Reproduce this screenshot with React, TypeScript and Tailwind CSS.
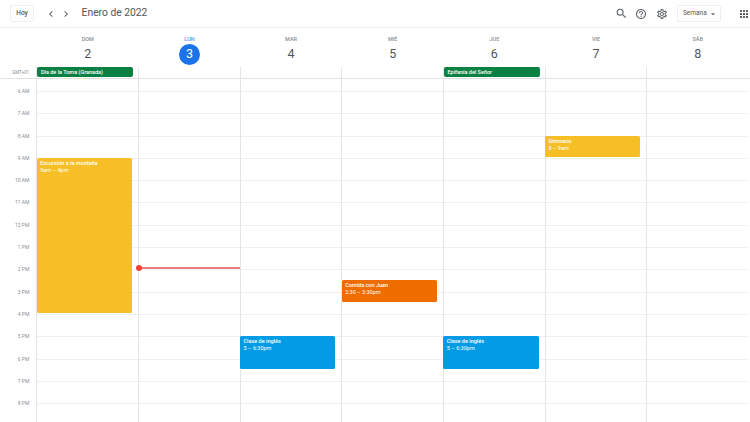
import React from 'react';
import {
  MdApps,
  MdArrowDropDown,
  MdChevronLeft,
  MdChevronRight,
  MdHelpOutline,
  MdOutlineSettings,
  MdSearch,
} from 'react-icons/md';

const days = [
  { name: 'DOM', num: '2' },
  { name: 'LUN', num: '3', today: true },
  { name: 'MAR', num: '4' },
  { name: 'MIÉ', num: '5' },
  { name: 'JUE', num: '6' },
  { name: 'VIE', num: '7' },
  { name: 'SÁB', num: '8' },
];

const hours = ['6 AM', '7 AM', '8 AM', '9 AM', '10 AM', '11 AM', '12 PM', '1 PM', '2 PM', '3 PM', '4 PM', '5 PM', '6 PM', '7 PM', '8 PM'];

const columns = 'grid grid-cols-[36.4px_repeat(7,101.65px)]';

const Header = () => (
  <header className="flex h-[28px] items-center border-b border-[#eef0f1] pl-[10px]">
    <button className="h-[17px] w-[24px] rounded-[2px] border border-[#eceef0] text-[6.5px] font-medium text-[#50555a]">Hoy</button>
    <MdChevronLeft className="ml-[11px] text-[#5f6368]" size={12} />
    <MdChevronRight className="ml-[2.6px] text-[#5f6368]" size={12} />
    <h1 className="ml-[10px] text-[10.3px] leading-none text-[#50555a]">Enero de 2022</h1>
    <div className="ml-auto flex items-center">
      <MdSearch className="text-[#5f6368]" size={13} />
      <MdHelpOutline className="ml-[7px] text-[#5f6368]" size={12} />
      <MdOutlineSettings className="ml-[9px] text-[#5f6368]" size={12} />
      <button className="ml-[9px] flex h-[17px] w-[44px] items-center rounded-[2px] border border-[#eceef0] pl-[5px] text-[6.5px] text-[#50555a]">
        Semana
        <MdArrowDropDown className="ml-[1px] text-[#5f6368]" size={10} />
      </button>
      <MdApps className="ml-[17px] text-[#5f6368]" size={12} />
    </div>
  </header>
);

const DayHeads = () => (
  <div className="grid h-[39px] grid-cols-[37px_repeat(7,101.65px)]">
    <div />
    {days.map((d) => (
      <div key={d.name} className="flex flex-col items-center pt-[8px]">
        <span className={`text-[5.5px] font-medium leading-[7px] ${d.today ? 'text-[#5f95e8]' : 'text-[#8a8f94]'}`}>{d.name}</span>
        {d.today ? (
          <span className="mt-[1px] flex h-[21px] w-[21px] items-center justify-center rounded-full bg-[#1a73e8] text-[12.5px] text-white">{d.num}</span>
        ) : (
          <span className="mt-[1px] flex h-[21px] items-center text-[12.5px] text-[#50555a]">{d.num}</span>
        )}
      </div>
    ))}
  </div>
);

const AllDay = () => (
  <div className={`${columns} h-[12px] border-b border-[#dfe1e4]`}>
    <div className="pr-[7px] pt-[2px] text-right text-[4.5px] leading-[7px] text-[#8a8f94]">GMT+01</div>
    {days.map((d) => (
      <div key={d.name} className="border-l border-[#e3e5e9]">
        {(d.num === '2' || d.num === '6') && (
          <div className="h-[10px] w-[96px] truncate rounded-[2px] bg-[#0b8043] pl-[3.5px] text-[5.5px] font-medium leading-[10px] text-white">
            {d.num === '2' ? 'Día de la Toma (Granada)' : 'Epifanía del Señor'}
          </div>
        )}
      </div>
    ))}
  </div>
);

const EventBox = ({ title, time, className }: { title: string; time: string; className: string }) => (
  <div className={`absolute left-[-0.7px] w-[95.3px] rounded-[1.5px] px-[3.5px] pt-[2px] text-[5.5px] leading-[7px] text-white ${className}`}>
    <div className="font-medium">{title}</div>
    <div>{time}</div>
  </div>
);

const DayColumn = ({ children }: { children?: React.ReactNode }) => (
  <div className="relative border-l border-[#e3e5e9]">
    <div className="h-[13px] border-b border-[#eef0f2]" />
    {hours.map((h) => (
      <div key={h} className="h-[22.3px] border-b border-[#eef0f2]" />
    ))}
    {children}
  </div>
);

export default function App() {
  return (
    <div className="h-[422px] w-[750px] overflow-hidden bg-white font-['Roboto',sans-serif]">
      <Header />
      <DayHeads />
      <AllDay />
      <div className={columns}>
        <div className="pt-[9px]">
          {hours.map((h) => (
            <div key={h} className="h-[22.3px] pr-[7px] text-right text-[5px] leading-[7px] text-[#8a8f94]">{h}</div>
          ))}
        </div>
        <DayColumn>
          <EventBox title="Excursión a la montaña" time="9am – 4pm" className="top-[79.3px] h-[154.4px] bg-[#f6bf26]" />
        </DayColumn>
        <DayColumn>
          {/* now line */}
          <div className="absolute left-0 right-0 top-[188.25px] h-[1.5px] bg-[#e57f78]" />
          <div className="absolute left-[-3px] top-[186.25px] h-[5.5px] w-[5.5px] rounded-full bg-[#ea4335]" />
        </DayColumn>
        <DayColumn>
          <EventBox title="Clase de inglés" time="5 – 6:30pm" className="top-[257px] h-[32.7px] bg-[#039be5]" />
        </DayColumn>
        <DayColumn>
          <EventBox title="Comida con Juan" time="2:30 – 3:30pm" className="top-[201.3px] h-[21.7px] bg-[#ef6c00]" />
        </DayColumn>
        <DayColumn>
          <EventBox title="Clase de inglés" time="5 – 6:30pm" className="top-[257px] h-[32.7px] bg-[#039be5]" />
        </DayColumn>
        <DayColumn>
          <EventBox title="Gimnasio" time="8 – 9am" className="top-[57px] h-[21px] bg-[#f6bf26]" />
        </DayColumn>
        <DayColumn />
      </div>
    </div>
  );
}
